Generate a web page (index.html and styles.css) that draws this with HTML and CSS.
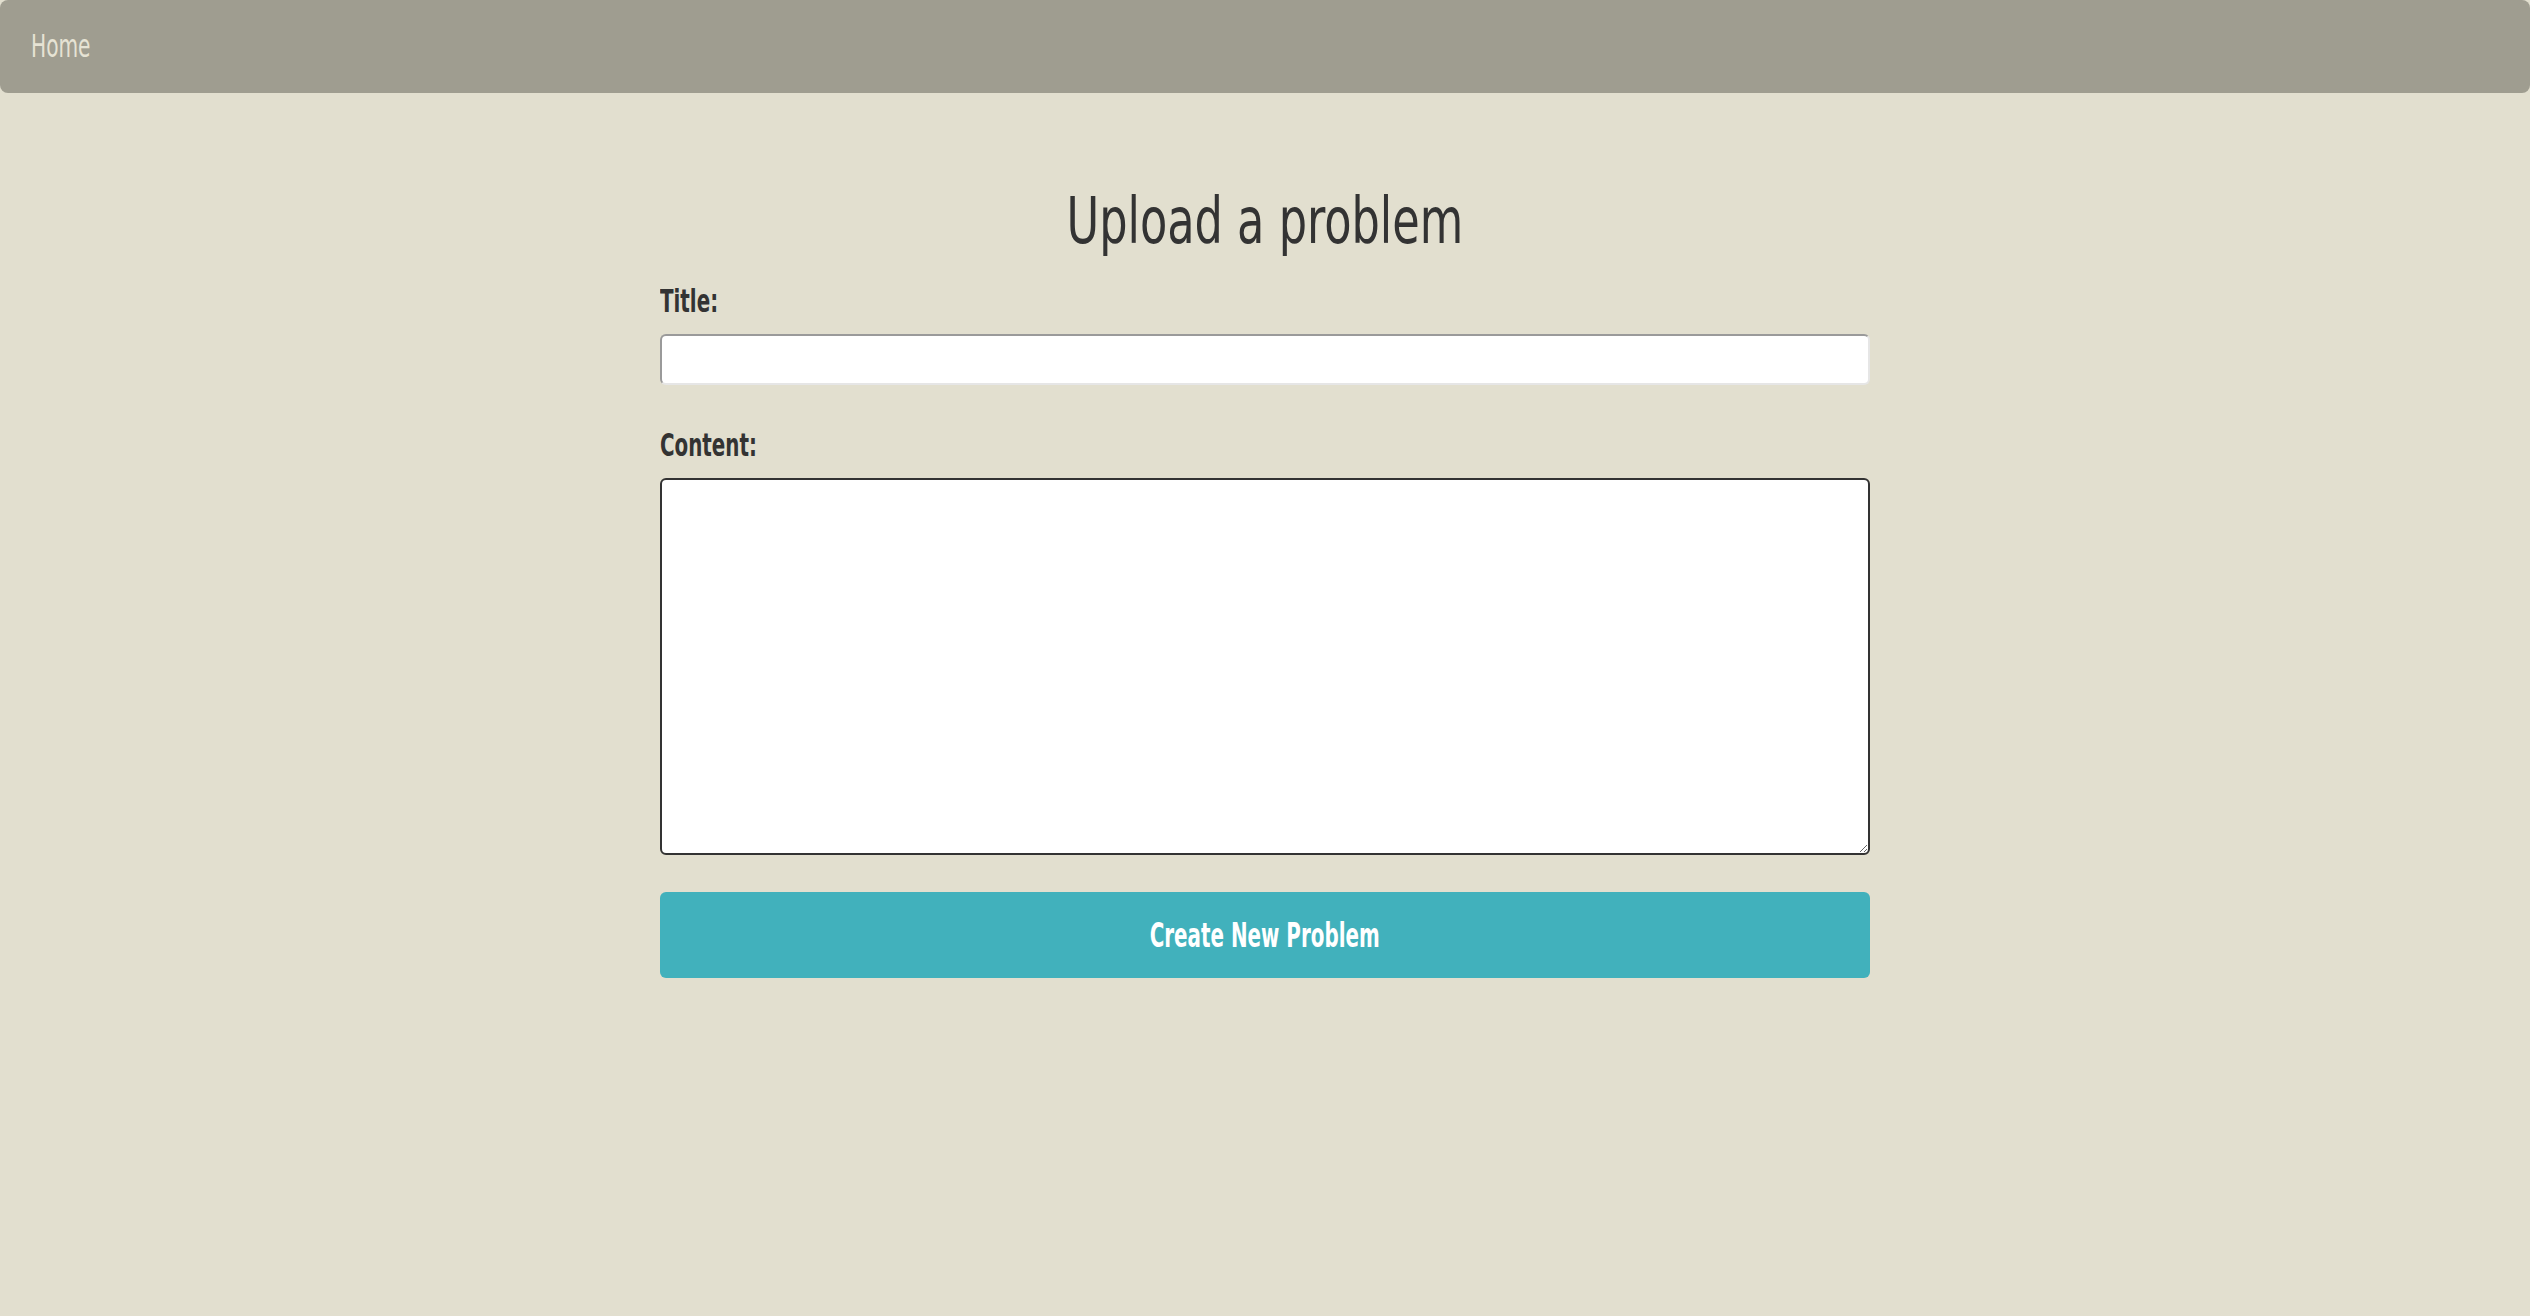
FILE: index.html
```html
<!DOCTYPE html>
<html lang="en">
<head>
<meta charset="utf-8">
<title>Upload a problem</title>
<link rel="stylesheet" href="styles.css">
</head>
<body>
<nav class="topbar">
  <a class="topbar-link" href="#"><span class="narrow narrow-left">Home</span></a>
</nav>
<main class="page">
  <h1 class="page-title"><span class="narrow narrow-center">Upload a problem</span></h1>
  <form class="problem-form">
    <label class="field-label" for="title"><span class="narrow narrow-left">Title:</span></label>
    <input class="field-input" id="title" type="text">
    <label class="field-label field-label-content" for="content"><span class="narrow narrow-left">Content:</span></label>
    <textarea class="field-textarea" id="content"></textarea>
    <button class="submit-btn" type="button"><span class="narrow narrow-center">Create New Problem</span></button>
  </form>
</main>
</body>
</html>
```
FILE: styles.css
```css
html, body {
  margin: 0;
  padding: 0;
}
body {
  background: #e2dfcf;
  color: #333333;
  font-family: "DejaVu Sans Condensed", "Liberation Sans", sans-serif;
  min-height: 1316px;
}
.narrow {
  display: inline-block;
  white-space: nowrap;
}
.narrow-left {
  transform-origin: left center;
}
.narrow-center {
  transform-origin: center center;
}
.topbar {
  height: 93px;
  background: #9f9d90;
  border-radius: 8px;
  display: flex;
  align-items: center;
  padding-left: 31px;
  box-sizing: border-box;
}
.topbar-link {
  color: #e6e3d4;
  text-decoration: none;
  font-size: 32px;
  line-height: 38px;
  margin-top: -2px;
}
.topbar-link .narrow {
  transform: scaleX(0.70);
}
.page {
  width: 1210px;
  margin: 0 auto;
  padding-top: 89px;
}
.page-title {
  margin: 0;
  text-align: center;
  font-weight: normal;
  font-size: 64px;
  line-height: 78px;
}
.page-title .narrow {
  transform: scaleX(0.775);
}
.problem-form {
  display: flex;
  flex-direction: column;
  margin-top: 22px;
}
.field-label {
  font-size: 32px;
  line-height: 38px;
  font-weight: bold;
  margin-bottom: 14px;
}
.field-label .narrow {
  transform: scaleX(0.69);
}
.field-label-content {
  margin-top: 41px;
}
.field-input {
  box-sizing: border-box;
  height: 51px;
  width: 100%;
  margin: 0;
  background: #ffffff;
  border-style: solid;
  border-width: 2px;
  border-color: #9a9a9a #e6e6e6 #e6e6e6 #9a9a9a;
  border-radius: 6px;
  font-size: 26px;
  padding: 0 8px;
}
.field-textarea {
  box-sizing: border-box;
  height: 377px;
  width: 100%;
  margin: 0;
  background: #ffffff;
  border: 2px solid #333333;
  border-radius: 6px;
  font-size: 26px;
  padding: 6px;
}
.submit-btn {
  margin-top: 37px;
  height: 86px;
  width: 100%;
  border: none;
  border-radius: 6px;
  background: #41b1bc;
  color: #ffffff;
  font-family: inherit;
  font-size: 33px;
  font-weight: bold;
  cursor: pointer;
}
.submit-btn .narrow {
  transform: scaleX(0.67);
}
```
